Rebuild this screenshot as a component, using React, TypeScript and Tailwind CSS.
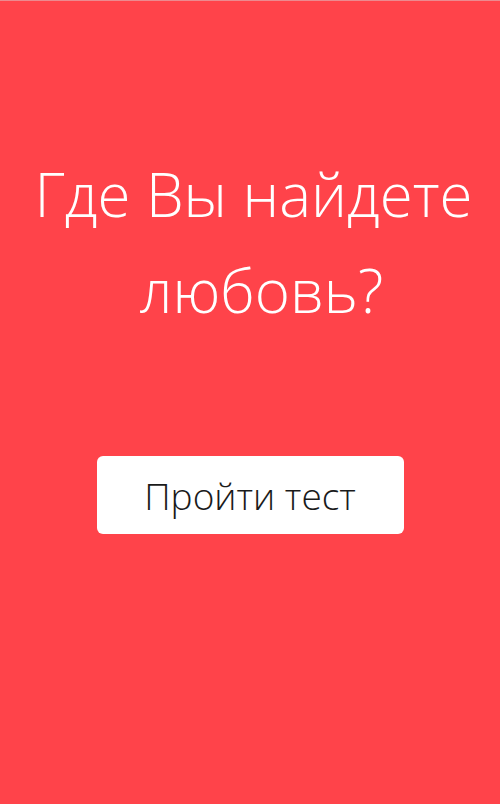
export default function App() {
  return (
    <div
      className="w-full h-[804px] bg-[#ff434a] border-t border-[#ec8a8f] flex flex-col items-center"
      style={{ fontFamily: '"Open Sans", "Noto Sans", sans-serif' }}
    >
      <h1 className="mt-[145px] ml-[7px] flex flex-col items-center text-center text-white font-light text-[60px] leading-[96px]">
        <span>Где Вы найдете</span>
        <span className="pl-[16px]">любовь?</span>
      </h1>
      <button className="mt-[118px] w-[307px] h-[78px] bg-white rounded-[6px] flex items-center justify-center text-[#1a1a1a] font-light text-[37px] leading-none">
        Пройти тест
      </button>
    </div>
  );
}
